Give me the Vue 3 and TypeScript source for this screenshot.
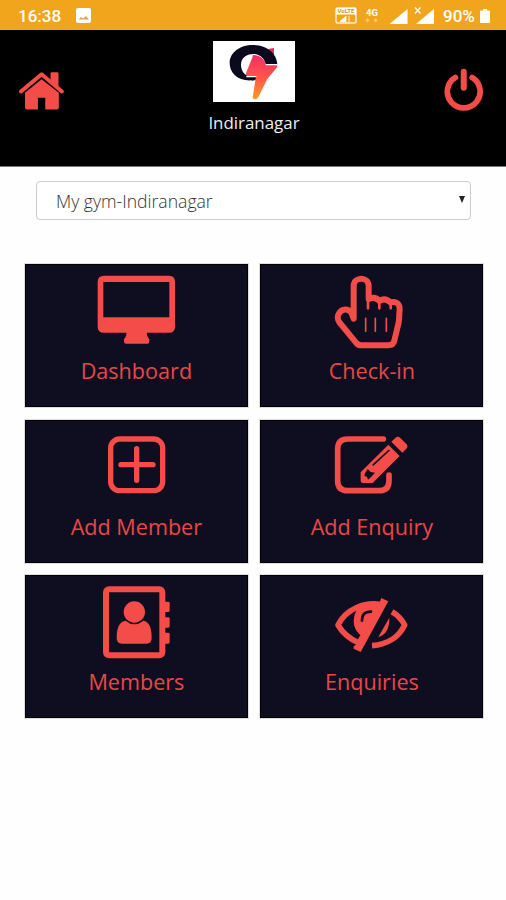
<script setup lang="ts">
import { ref } from 'vue'

interface Tile {
  label: string
  icon: string
  viewBox: string
}

const branch = ref('My gym-Indiranagar')
const tiles: Tile[] = [
  { label: 'Dashboard', icon: 'desktop', viewBox: '17 20 663 258' },
  { label: 'Check-in', icon: 'hand', viewBox: '19 20 663 258' },
  { label: 'Add Member', icon: 'plus', viewBox: '17 23 663 258' },
  { label: 'Add Enquiry', icon: 'edit', viewBox: '19 23 663 258' },
  { label: 'Members', icon: 'contacts', viewBox: '17 24 663 258' },
  { label: 'Enquiries', icon: 'eye', viewBox: '19 24 663 258' },
]
</script>

<template>
  <div class="screen">
    <div class="status">
      <span class="clock">16:38</span>
      <svg class="photo" viewBox="0 0 15 15">
        <rect width="15" height="15" rx="2" fill="#fff" />
        <path d="M2.500 11.500 5 9l2 1.500 3-2.500 3 3.500z" fill="#d9a755" />
      </svg>
      <svg class="signals" viewBox="0 0 105 20">
        <rect x="1" y="2" width="20" height="15" rx="1.5" fill="none" stroke="#fff" stroke-opacity=".85" stroke-width="1.4" />
        <rect x="1" y="2" width="20" height="6.5" fill="#fff" />
        <text x="11" y="7.4" class="volte">VoLTE</text>
        <path d="M5 15.500 11 10v5.500zM14 10v6" fill="#fff" stroke="#fff" stroke-width=".8" />
        <text x="37" y="9.5" class="fourg">4G</text>
        <path d="m30.500 14.500 2-2.500 2 2.500-2 2zM38.500 14.500l2-2.500 2 2.500-2 2z" fill="#fff" opacity=".4" />
        <path d="M54.500 18 72.500 3v15z" fill="#fff" />
        <path d="M81 18 99 3v15z" fill="#fff" />
        <path d="m80 1.500 5.500 6M85.500 1.500 80 7.500" stroke="#fff" stroke-width="1.2" />
      </svg>
      <span class="percent">90%</span>
      <svg class="battery" viewBox="0 0 10 14">
        <path d="M3 0h4v1.500h2q1 0 1 1V13q0 1-1 1H1q-1 0-1-1V2.500q0-1 1-1h2z" fill="#fff" />
      </svg>
    </div>

    <header class="header">
      <svg class="home" viewBox="57 212 137 116">
        <path d="M63 273 125 221 186 273" fill="none" stroke="#f44c48" stroke-width="12" stroke-linecap="round" stroke-linejoin="round" />
        <path d="M152 219q0-4 4-4h16q4 0 4 4v44l-24-20z" fill="#f44c48" />
        <path d="M75 277 125 236 177 277v44q0 6-6 6h-35v-35h-22v35H81q-6 0-6-6z" fill="#f44c48" />
      </svg>
      <div class="brand">
        <svg class="logo" viewBox="40 20 246 183">
          <defs>
            <linearGradient id="bolt" x1="0" y1="0" x2="0" y2="1">
              <stop offset="0" stop-color="#f22e68" />
              <stop offset=".5" stop-color="#ff5549" />
              <stop offset="1" stop-color="#ff9a27" />
            </linearGradient>
          </defs>
          <rect x="40" y="20" width="246" height="183" fill="#fff" />
          <path d="M205 44l18-3v22z" fill="#e52b67" />
          <path fill="#0b0a1d" fill-rule="evenodd" d="M90 86C90 55 120 32 160 32 201 32 232 56 233 91H198L178 128 170 133 158 138C116 142 90 117 90 86ZM124 91C124 109 136 125 148 124L198 91C195 72 181 59 161 59 139 59 124 72 124 91Z" />
          <path d="M160 62q28-1 40 30h29q7 1 2 8l-28 34-27 54q-6 11-15 5-3-3-1-9l9-59h-25q-8-2-4-11l15-37q4-10 5-15z" fill="url(#bolt)" />
          <path d="M140 127h30M198 91h36" fill="none" stroke="#fff" stroke-width="4" />
          <path d="M148 132h20l-1 5-9 2z" fill="#0b0a1d" />
        </svg>
        <span class="gym">Indiranagar</span>
      </div>
      <svg class="power" viewBox="575 204 118 128">
        <path d="M609 232A49 49 0 1 0 659 232" fill="none" stroke="#f44c48" stroke-width="17" stroke-linecap="round" />
        <path d="M634 215v48" stroke="#f44c48" stroke-width="18" stroke-linecap="round" />
      </svg>
    </header>

    <main>
      <div class="select" role="combobox">
        <span>{{ branch }}</span>
        <svg class="arrow" viewBox="0 0 6 7"><path d="M0 0h6L3 7z" fill="#222" /></svg>
      </div>

      <nav class="grid">
        <button v-for="tile in tiles" :key="tile.label" class="tile">
          <svg class="icon" :viewBox="tile.viewBox">
            <template v-if="tile.icon === 'desktop'">
              <path fill="#f44c48" fill-rule="evenodd" d="M251 52H446Q464 52 464 70V205Q464 223 446 223H380Q378 231 387 243V250Q387 256 381 256H317Q311 256 311 250V243Q320 231 318 223H251Q232 223 232 205V70Q232 52 251 52ZM249 71V177H447V71Z" />
            </template>
            <template v-else-if="tile.icon === 'hand'">
              <path class="line" stroke-width="18" d="M297 181V83C297 54 342 54 342 83V122Q362 113 374 128Q391 116 407 132C431 127 438 142 434 165Q434 190 429 205L419 247Q416 261 401 261H320Q310 261 304 253L255 193Q245 179 252 167C262 148 281 151 290 163Z" />
              <path class="line" stroke-width="8" d="M340 122v28M374 126v24M408 132v18" />
              <path class="line" stroke-width="5" d="M333 180v39M362 180v39M395 180v39" />
            </template>
            <template v-else-if="tile.icon === 'plus'">
              <rect class="line" x="271" y="77" width="156" height="155" rx="27" stroke-width="16" />
              <path class="line" stroke-width="16" d="M349 106v95M302 154h96" />
            </template>
            <template v-else-if="tile.icon === 'edit'">
              <path class="line" stroke-width="17" d="M386 77H280Q249 77 249 107V202Q249 232 280 232H373Q403 232 403 202V185" />
              <path fill="#f44c48" d="M401 94 435 128 354 209H325Q318 209 318 202V177ZM410 85 423 73Q430 67 437 74L455 92Q462 99 455 106L443 118Z" />
              <path d="M354 156 404 110" stroke="#0f0e20" stroke-width="5" />
              <path d="m331 180 8-13 9 9 13 2-11 12-10 9-3-9-8-2z" fill="#0f0e20" />
            </template>
            <template v-else-if="tile.icon === 'contacts'">
              <rect class="line" x="257" y="64" width="169" height="198" rx="9" stroke-width="18" />
              <path fill="#f44c48" d="M430 101h14q4 0 4 4v22q0 5-4 5h-14zM430 148h14q4 0 4 4v22q0 5-4 5h-14zM430 194h14q4 0 4 4v24q0 5-4 5h-14z" />
              <circle cx="342" cy="132" r="32" fill="#f44c48" />
              <path fill="#f44c48" d="M316 158Q342 180 369 158 394 161 394 210 394 227 378 227H305Q289 227 289 210 289 161 316 158Z" />
            </template>
            <template v-else>
              <path class="eye-line" d="M375 109C329 103 275 122 250 171Q271 207 313 225" />
              <path class="eye-line" d="M412 131Q437 145 450 171C433 207 398 230 352 233" />
              <path fill="#f44c48" d="M309 122Q330 103 356 106L373 107 326 207Q297 191 297 159 298 136 309 122ZM404 149C405 178 395 201 371 207Z" />
              <path d="M322 158Q321 131 349 131" fill="none" stroke="#0f0e20" stroke-width="8" stroke-linecap="round" />
              <path fill="#f44c48" d="M380 90 401 100 318 252 297 242V235L307 228 308 217 375 103Z" />
            </template>
          </svg>
          <span class="label">{{ tile.label }}</span>
        </button>
      </nav>
    </main>
  </div>
</template>

<style>
body {
  margin: 0;
  background: #fefefe;
}
</style>

<style scoped>
.screen {
  width: 506px;
  height: 900px;
  overflow: hidden;
  background: #fefefe;
  font-family: "Open Sans", "Noto Sans", sans-serif;
}
.status {
  box-sizing: border-box;
  height: 30px;
  padding: 1px 16px 0 18px;
  display: flex;
  align-items: center;
  background: #f1a51c;
  color: #fff;
  font: 500 17px/28px Roboto, sans-serif;
}
.clock { width: 43px; }
.photo {
  width: 15px;
  height: 15px;
  margin-left: 15px;
  margin-bottom: 1px;
}
.signals {
  width: 105px;
  height: 20px;
  margin-left: auto;
}
.volte {
  font: 700 6px Roboto, sans-serif;
  fill: #d99423;
  text-anchor: middle;
}
.fourg {
  font: 700 9.500px Roboto, sans-serif;
  fill: #fff;
  text-anchor: middle;
}
.percent {
  width: 33px;
  margin-left: 3px;
  font-size: 17px;
}
.battery {
  width: 10px;
  height: 14px;
  margin-left: 4px;
}
.header {
  box-sizing: border-box;
  height: 137px;
  padding: 11px 22.500px 0 19px;
  border-bottom: 1px solid #777;
  display: grid;
  grid-template-columns: 189px 92px 1fr;
  background: #000;
}
.home {
  width: 45.500px;
  height: 39px;
  margin-top: 29.500px;
}
.brand {
  display: flex;
  flex-direction: column;
  align-items: center;
}
.logo {
  width: 82px;
  height: 61px;
}
.gym {
  margin-top: 9px;
  color: #eee;
  font-size: 16.900px;
  line-height: 24px;
}
.power {
  width: 39.500px;
  height: 43px;
  margin-top: 26.500px;
  justify-self: end;
}
.select {
  box-sizing: border-box;
  width: 435px;
  height: 39px;
  margin: 14px 0 0 36px;
  padding: 0 5px 0 19px;
  border: 1px solid #ccc;
  border-radius: 4px;
  display: flex;
  align-items: center;
  justify-content: space-between;
  color: #333;
  font-size: 17.600px;
  font-weight: 300;
  background: #fff;
}
.arrow {
  width: 6px;
  height: 7px;
  margin-bottom: 3px;
}
.grid {
  display: grid;
  grid-template-columns: 223px 223px;
  grid-auto-rows: 143px;
  gap: 12.500px;
  padding: 44px 0 0 24.900px;
}
.tile {
  box-sizing: border-box;
  padding: 0;
  border: 1px solid #000;
  outline: 1px solid #ddd;
  display: flex;
  flex-direction: column;
  align-items: center;
  background: #0f0e20;
  color: #e94747;
  font-family: inherit;
}
.icon {
  width: 221px;
  height: 86px;
}
.label {
  margin-top: 5px;
  font-size: 21.600px;
  line-height: 30px;
}
.line {
  fill: none;
  stroke: #f44c48;
  stroke-linecap: round;
  stroke-linejoin: round;
}
.eye-line {
  fill: none;
  stroke: #f44c48;
  stroke-width: 17;
  stroke-linejoin: round;
}
</style>
